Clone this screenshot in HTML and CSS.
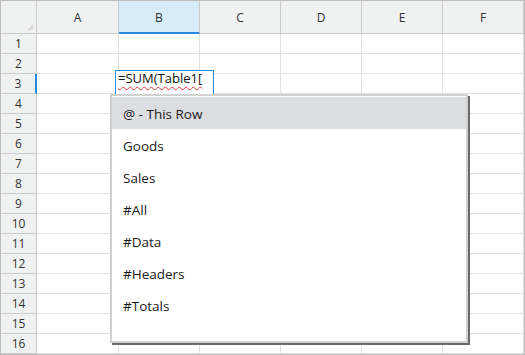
FILE: index.html
```html
<!DOCTYPE html>
<html lang="en">
<head>
  <meta charset="UTF-8">
  <meta name="viewport" content="width=device-width, initial-scale=1">
  <title>Spreadsheet</title>
  <link rel="stylesheet" href="styles.css">
</head>
<body>

  <div class="sheet">
    <div class="row head">
      <div class="corner"></div>
      <div class="col">A</div><div class="col sel">B</div><div class="col">C</div>
      <div class="col">D</div><div class="col">E</div><div class="col">F</div>
    </div>
    <div class="row"><div class="num">1</div><div class="cell"></div><div class="cell"></div><div class="cell"></div><div class="cell"></div><div class="cell"></div><div class="cell"></div></div>
    <div class="row"><div class="num">2</div><div class="cell"></div><div class="cell"></div><div class="cell"></div><div class="cell"></div><div class="cell"></div><div class="cell"></div></div>
    <div class="row"><div class="num sel">3</div><div class="cell"></div><div class="cell"></div><div class="cell"></div><div class="cell"></div><div class="cell"></div><div class="cell"></div></div>
    <div class="row"><div class="num">4</div><div class="cell"></div><div class="cell"></div><div class="cell"></div><div class="cell"></div><div class="cell"></div><div class="cell"></div></div>
    <div class="row"><div class="num">5</div><div class="cell"></div><div class="cell"></div><div class="cell"></div><div class="cell"></div><div class="cell"></div><div class="cell"></div></div>
    <div class="row"><div class="num">6</div><div class="cell"></div><div class="cell"></div><div class="cell"></div><div class="cell"></div><div class="cell"></div><div class="cell"></div></div>
    <div class="row"><div class="num">7</div><div class="cell"></div><div class="cell"></div><div class="cell"></div><div class="cell"></div><div class="cell"></div><div class="cell"></div></div>
    <div class="row"><div class="num">8</div><div class="cell"></div><div class="cell"></div><div class="cell"></div><div class="cell"></div><div class="cell"></div><div class="cell"></div></div>
    <div class="row"><div class="num">9</div><div class="cell"></div><div class="cell"></div><div class="cell"></div><div class="cell"></div><div class="cell"></div><div class="cell"></div></div>
    <div class="row"><div class="num">10</div><div class="cell"></div><div class="cell"></div><div class="cell"></div><div class="cell"></div><div class="cell"></div><div class="cell"></div></div>
    <div class="row"><div class="num">11</div><div class="cell"></div><div class="cell"></div><div class="cell"></div><div class="cell"></div><div class="cell"></div><div class="cell"></div></div>
    <div class="row"><div class="num">12</div><div class="cell"></div><div class="cell"></div><div class="cell"></div><div class="cell"></div><div class="cell"></div><div class="cell"></div></div>
    <div class="row"><div class="num">13</div><div class="cell"></div><div class="cell"></div><div class="cell"></div><div class="cell"></div><div class="cell"></div><div class="cell"></div></div>
    <div class="row"><div class="num">14</div><div class="cell"></div><div class="cell"></div><div class="cell"></div><div class="cell"></div><div class="cell"></div><div class="cell"></div></div>
    <div class="row"><div class="num">15</div><div class="cell"></div><div class="cell"></div><div class="cell"></div><div class="cell"></div><div class="cell"></div><div class="cell"></div></div>
    <div class="row"><div class="num">16</div><div class="cell"></div><div class="cell"></div><div class="cell"></div><div class="cell"></div><div class="cell"></div><div class="cell"></div></div>

    <!-- cell editor + autocomplete list -->
    <div class="editor"><span class="formula">=SUM(Table1[</span></div>
    <ul class="suggest">
      <li class="active">@ - This Row</li>
      <li>Goods</li>
      <li>Sales</li>
      <li>#All</li>
      <li>#Data</li>
      <li>#Headers</li>
      <li>#Totals</li>
    </ul>
  </div>

</body>
</html>
```

FILE: styles.css
```css
* {
  box-sizing: border-box;
}

body {
  margin: 0;
  padding: 0;
  background: #fff;
  font-family: "Open Sans", "Noto Sans", sans-serif;
  color: #222;
}

.sheet {
  position: relative;
  width: 525px;
  height: 355px;
  border: 1px solid #bdbdbd;
  overflow: hidden;
  background: #fff;
}

.row {
  display: grid;
  grid-template-columns: 36px 82px repeat(4, 81px) 1fr;
  height: 20px;
}

.row.head {
  height: 33px;
}

.cell {
  border-right: 1px solid #e1e1e1;
  border-bottom: 1px solid #e1e1e1;
}

.corner,
.col,
.num {
  background: #f0f1f1;
  border-right: 1px solid #cbcbcb;
  border-bottom: 1px solid #cbcbcb;
  color: #333;
  font-size: 12px;
  text-align: center;
}

.corner {
  position: relative;
}

.corner::after {
  content: "";
  position: absolute;
  right: 3px;
  bottom: 3px;
  border-left: 6px solid transparent;
  border-bottom: 6px solid #d9d9d9;
}

.col {
  padding-top: 9px;
  line-height: 16px;
}

.col.sel {
  background: #d8ebf9;
  border-bottom: 2px solid #2a8ade;
}

.num {
  line-height: 19px;
}

.num.sel {
  border-right: 2px solid #2a8ade;
}

.editor {
  position: absolute;
  left: 114px;
  top: 69px;
  width: 99px;
  height: 25px;
  border: 1px solid #2a8ade;
  background: #fff;
  padding-left: 2px;
  font-size: 13px;
  line-height: 15px;
  color: #111;
}

.formula {
  text-decoration: underline wavy #e53935;
  text-decoration-thickness: 1px;
  text-underline-offset: 3px;
}

.suggest {
  position: absolute;
  left: 109px;
  top: 93px;
  width: 358px;
  height: 249px;
  margin: 0;
  padding: 1px 0 0;
  list-style: none;
  background: #fff;
  border: 2px solid #d0d0d0;
  box-shadow: 2px 2px 0 0 #6b6b6b;
}

.suggest li {
  height: 32px;
  padding: 3px 0 0 11px;
  font-size: 13.5px;
  line-height: 29px;
  color: #1a1a1a;
}

.suggest li.active {
  background: #dcdde0;
}
```
